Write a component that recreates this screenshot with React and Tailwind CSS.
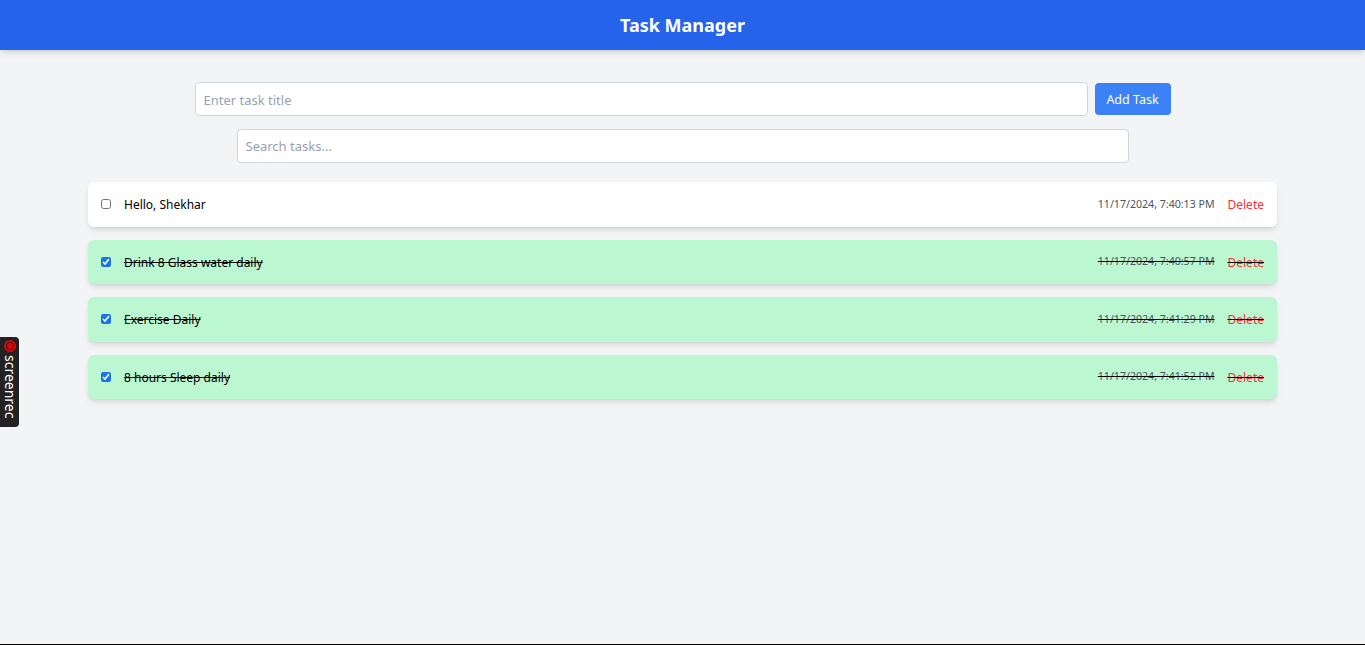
import React, { useState } from 'react';

const initialTasks = [
  { id: 1, title: 'Hello, Shekhar', done: false, createdAt: '11/17/2024, 7:40:13 PM' },
  { id: 2, title: 'Drink 8 Glass water daily', done: true, createdAt: '11/17/2024, 7:40:57 PM' },
  { id: 3, title: 'Exercise Daily', done: true, createdAt: '11/17/2024, 7:41:29 PM' },
  { id: 4, title: '8 hours Sleep daily', done: true, createdAt: '11/17/2024, 7:41:52 PM' },
];

export default function App() {
  const [tasks, setTasks] = useState(initialTasks);
  const [title, setTitle] = useState('');
  const [search, setSearch] = useState('');

  const addTask = () => {
    const t = title.trim();
    if (!t) return;
    setTasks([...tasks, { id: Date.now(), title: t, done: false, createdAt: new Date().toLocaleString() }]);
    setTitle('');
  };

  const toggle = (id) => setTasks(tasks.map((t) => (t.id === id ? { ...t, done: !t.done } : t)));
  const remove = (id) => setTasks(tasks.filter((t) => t.id !== id));

  const visible = tasks.filter((t) => t.title.toLowerCase().includes(search.toLowerCase()));

  return (
    <div className="relative h-[645px] bg-gray-100 border-b border-black font-['Noto_Sans',sans-serif] text-black">
      {/* Header */}
      <header className="h-[50px] bg-[#2563eb] shadow-md flex items-center justify-center">
        <h1 className="text-white text-[18px] font-bold">Task Manager</h1>
      </header>

      {/* Inputs */}
      <div className="pt-8 flex flex-col items-center">
        <div className="flex items-center gap-[7px]">
          <input
            type="text"
            value={title}
            onChange={(e) => setTitle(e.target.value)}
            placeholder="Enter task title"
            className="w-[893px] h-[34px] bg-white border border-gray-300 rounded px-2 pt-[1px] text-[13px] placeholder-gray-400 focus:outline-none"
          />
          <button
            onClick={addTask}
            className="h-[32px] w-[76px] bg-[#3b82f6] text-white text-[12.5px] rounded pt-[2px]"
          >
            Add Task
          </button>
        </div>
        <input
          type="text"
          value={search}
          onChange={(e) => setSearch(e.target.value)}
          placeholder="Search tasks..."
          className="mt-[13px] w-[892px] h-[34px] bg-white border border-gray-300 rounded px-2 text-[13px] placeholder-gray-400 focus:outline-none"
        />
      </div>

      {/* Task list */}
      <ul className="mx-[88px] mt-[19px] flex flex-col gap-[13px]">
        {visible.map((task) => (
          <li
            key={task.id}
            className={`h-[44.5px] rounded-md shadow-md flex items-center px-[13px] ${
              task.done ? 'bg-[#bbf7d0] line-through' : 'bg-white'
            }`}
          >
            <input
              type="checkbox"
              checked={task.done}
              onChange={() => toggle(task.id)}
              className="w-[10px] h-[10px] accent-[#1a73e8]"
            />
            <span className="ml-[13px] text-[12px] flex-1 pt-[2px]">{task.title}</span>
            <span className="text-[10.6px] text-gray-600 pt-[1px]">{task.createdAt}</span>
            <button onClick={() => remove(task.id)} className="ml-[13px] text-[12px] text-red-500 pt-[2px]">
              Delete
            </button>
          </li>
        ))}
      </ul>

      {/* screen recorder badge */}
      <div className="absolute left-0 top-[337px] w-[19px] h-[90px] bg-[#222] rounded-r flex flex-col items-center pt-[3px]">
        <div className="w-[12px] h-[12px] rounded-full border-2 border-red-600 flex items-center justify-center">
          <div className="w-[6px] h-[6px] rounded-full bg-red-600" />
        </div>
        <span className="mt-[3px] text-white text-[14px] leading-none [writing-mode:vertical-rl]">screenrec</span>
      </div>
    </div>
  );
}
